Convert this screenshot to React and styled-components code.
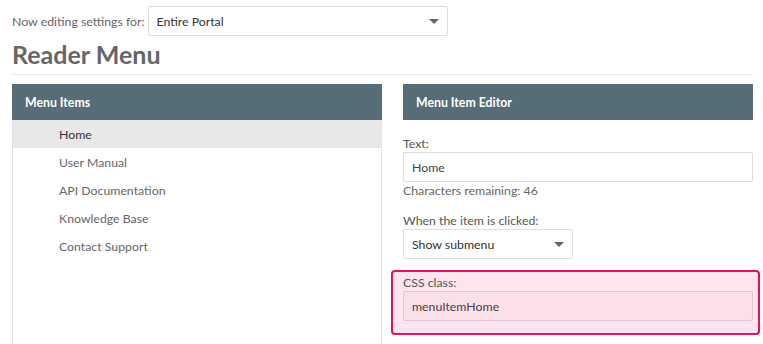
import styled, { createGlobalStyle } from "styled-components";

const GlobalStyle = createGlobalStyle`
  html, body {
    margin: 0;
    padding: 0;
    background: #fff;
    overflow: hidden;
  }
  body {
    font-family: Lato, "Open Sans", sans-serif;
    font-size: 12.3px;
    color: #555;
  }
`;

const Page = styled.div`
  padding: 6px 10px 0 12px;
`;

const TopBar = styled.div`
  display: flex;
  align-items: center;
  gap: 3px;
  color: #666;
`;

const SelectBox = styled.div`
  box-sizing: border-box;
  width: ${(props) => props.width}px;
  height: 30px;
  display: flex;
  align-items: center;
  justify-content: space-between;
  padding: 0 8px;
  border: 1px solid #dcdcdc;
  border-radius: 2px;
  background: #fff;
  color: #333;
`;

const Caret = styled.span`
  width: 0;
  height: 0;
  border-left: 5px solid transparent;
  border-right: 5px solid transparent;
  border-top: 5px solid #666;
`;

const Title = styled.h1`
  margin: 3px 0 0;
  font-size: 25px;
  font-weight: 700;
  color: #666;
  line-height: 30px;
  padding-bottom: 5px;
  border-bottom: 1px solid #e8e8e8;
`;

const Columns = styled.div`
  display: grid;
  grid-template-columns: 370px 350px;
  gap: 21px;
  margin-top: 9px;
`;

const ListPanel = styled.div`
  border-left: 1px solid #e3e3e3;
  border-right: 1px solid #e3e3e3;
  min-height: 270px;
`;

const PanelHeader = styled.div`
  height: 36px;
  display: flex;
  align-items: center;
  padding: 0 13px;
  background: #566d77;
  color: #fff;
  font-weight: 700;
  margin: 0 ${(props) => (props.$list ? "-1px" : "0")};
`;

const MenuItem = styled.div`
  height: 28px;
  display: flex;
  align-items: center;
  padding-left: 46px;
  background: ${(props) => (props.$active ? "#e8e8e8" : "transparent")};
  color: ${(props) => (props.$active ? "#333" : "#666")};
`;

const Editor = styled.div`
  display: flex;
  flex-direction: column;
`;

const Field = styled.div`
  display: flex;
  flex-direction: column;
  margin-top: ${(props) => props.$top || 0}px;
`;

const Label = styled.label`
  color: #555;
  line-height: 17px;
`;

const Input = styled.div`
  box-sizing: border-box;
  height: 30px;
  display: flex;
  align-items: center;
  padding: 0 8px;
  border: 1px solid ${(props) => (props.$tinted ? "#e6c3d1" : "#dcdcdc")};
  border-radius: 2px;
  background: ${(props) => (props.$tinted ? "#fbe0ea" : "#fff")};
  color: #444;
`;

const Hint = styled.div`
  color: #666;
  line-height: 18px;
`;

const Highlight = styled.div`
  margin: 11px -7px 0 -12px;
  padding: 2px 5px 12px 10px;
  border: 2px solid #e3115e;
  border-radius: 4px;
  background: #fde4ee;
`;

const items = [
  "Home",
  "User Manual",
  "API Documentation",
  "Knowledge Base",
  "Contact Support",
];

export default function App() {
  return (
    <>
      <GlobalStyle />
      <Page>
        <TopBar>
          <span>Now editing settings for:</span>
          <SelectBox width={300}>
            <span>Entire Portal</span>
            <Caret />
          </SelectBox>
        </TopBar>
        <Title>Reader Menu</Title>
        <Columns>
          <ListPanel>
            <PanelHeader $list>Menu Items</PanelHeader>
            {items.map((item, i) => (
              <MenuItem key={item} $active={i === 0}>
                {item}
              </MenuItem>
            ))}
          </ListPanel>
          <Editor>
            <PanelHeader>Menu Item Editor</PanelHeader>
            <Field $top={15}>
              <Label>Text:</Label>
              <Input>Home</Input>
              <Hint>Characters remaining: 46</Hint>
            </Field>
            <Field $top={12}>
              <Label>When the item is clicked:</Label>
              <SelectBox width={170}>
                <span>Show submenu</span>
                <Caret />
              </SelectBox>
            </Field>
            <Highlight>
              <Field>
                <Label>CSS class:</Label>
                <Input $tinted>menuItemHome</Input>
              </Field>
            </Highlight>
          </Editor>
        </Columns>
      </Page>
    </>
  );
}
